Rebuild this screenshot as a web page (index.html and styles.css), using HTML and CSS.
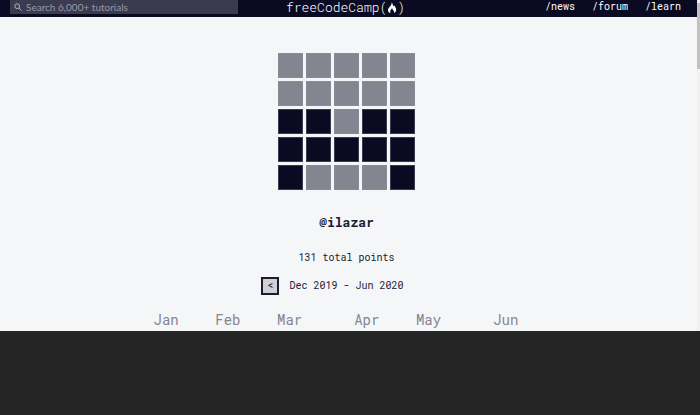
FILE: index.html
```html
<!DOCTYPE html>
<html lang="en">
<head>
  <meta charset="UTF-8">
  <meta name="viewport" content="width=device-width, initial-scale=1.0">
  <title>@ilazar | freeCodeCamp.org</title>
  <link rel="stylesheet" href="styles.css">
</head>
<body>

  <div class="page">
    <div class="content">
      <header class="site-header">
        <form class="search">
          <svg class="search-icon" viewBox="0 0 10 10" aria-hidden="true">
            <circle cx="4" cy="4" r="3"/>
            <path d="M6.3 6.3 9.4 9.4"/>
          </svg>
          <input type="text" aria-label="Search" placeholder="Search 6,000+ tutorials">
        </form>

        <a class="logo" href="#">freeCodeCamp(<svg class="flame" viewBox="0 0 10 12" aria-hidden="true">
            <path d="M4.8 0C5.4 2 6 3.6 7 5 7.3 4.6 7.4 4.2 7.3 3.6 8.8 5.2 9.8 7.2 9.5 9 9.2 10.5 8.3 11.5 7 12 7.4 11 7.3 10 6.6 9.2 5.9 8.5 5.4 7.8 5.2 6.8 4 8 3 9.2 3 10.4 3 11.2 3.3 11.7 3.6 12 1.6 11.5.5 10.2.6 8.6.7 6.6 2.9 5.3 3.8 3.6 4.5 2.4 4.8 1.2 4.8 0Z"/>
          </svg>)</a>

        <nav class="nav">
          <a href="#">/news</a>
          <a href="#">/forum</a>
          <a href="#">/learn</a>
        </nav>
      </header>

      <main class="profile">
        <div class="avatar">
          <i></i><i></i><i></i><i></i><i></i>
          <i></i><i></i><i></i><i></i><i></i>
          <i class="on"></i><i class="on"></i><i></i><i class="on"></i><i class="on"></i>
          <i class="on"></i><i class="on"></i><i class="on"></i><i class="on"></i><i class="on"></i>
          <i class="on"></i><i></i><i></i><i></i><i class="on"></i>
        </div>

        <h1>@ilazar</h1>
        <p class="points">131 total points</p>

        <div class="range">
          <button type="button" aria-label="Previous months">&lt;</button>
          <span>Dec 2019 - Jun 2020</span>
        </div>

        <!-- one unit per week -->
        <div class="months">
          <span>Jan</span>
          <span>Feb</span>
          <span>Mar</span>
          <span>Apr</span>
          <span>May</span>
          <span>Jun</span>
        </div>
      </main>
    </div>

    <div class="scrollbar">
      <div class="thumb"></div>
    </div>
  </div>

</body>
</html>
```

FILE: styles.css
```css
* {
  box-sizing: border-box;
}
body {
  margin: 0;
  background: #252525;
  color: #1b1b32;
  font: 10px/16px "Roboto Mono", "DejaVu Sans Mono", monospace;
}
a {
  color: #fff;
  text-decoration: none;
}
.page {
  display: flex;
  background: #f5f6f8;
}
.content {
  flex: 1;
  min-width: 0;
}

/* header */
.site-header {
  display: grid;
  grid-template-columns: 1fr auto 1fr;
  align-items: center;
  padding: 0 16px 3px 10px;
  background: #0a0a23;
  line-height: 14px;
}
.search {
  display: flex;
  align-items: center;
  gap: 4px;
  width: 228px;
  height: 14px;
  padding: 0 4px;
  background: #3b3b4f;
}
.search-icon {
  flex: none;
  width: 8px;
  height: 8px;
  fill: none;
  stroke: #d0d0d5;
}
.search input {
  flex: 1;
  min-width: 0;
  padding: 0;
  border: 0;
  outline: 0;
  background: none;
  color: #f5f6f7;
  font: 10px/14px Lato, sans-serif;
}
.search input::placeholder {
  color: #9999a5;
}
.logo {
  height: 14px;
  font-size: 13px;
  font-weight: 300;
}
.flame {
  width: 10px;
  height: 11px;
  fill: #fff;
  vertical-align: -1px;
}
.nav {
  display: flex;
  justify-content: flex-end;
  gap: 17px;
}

/* profile */
.profile {
  display: flex;
  flex-direction: column;
  align-items: center;
  padding: 36px 4px 0 0;
}
.avatar {
  display: grid;
  grid-template-columns: repeat(5, 25px);
  grid-auto-rows: 25px;
  gap: 3px;
}
.avatar i {
  background: #858591;
  border: 1px solid #8b8b97;
}
.avatar .on {
  background: #0a0a23;
  border-color: #3b3b4f;
}
h1 {
  margin: 22px 0 0;
  font-size: 13px;
  line-height: 20px;
}
.points {
  margin: 18px 0 0;
}
.range {
  display: flex;
  align-items: center;
  gap: 10px;
  margin: 11px 28px 0 0;
}
.range button {
  width: 18px;
  height: 18px;
  padding: 0;
  border: 2px solid #1b1b32;
  background: #d0d0d5;
  color: #1b1b32;
  font: inherit;
  line-height: 14px;
}
.months {
  display: grid;
  grid-template-columns: 4fr 4fr 5fr 4fr 5fr 3fr;
  width: 386px;
  max-width: 100%;
  margin-top: 15px;
  padding-bottom: 1px;
  color: #858591;
  font-size: 14px;
  line-height: 20px;
}

/* scrollbar */
.scrollbar {
  width: 3px;
  padding-top: 3px;
  background: #f1f1f1;
}
.thumb {
  height: 66px;
  background: #c1c1c1;
}
```
